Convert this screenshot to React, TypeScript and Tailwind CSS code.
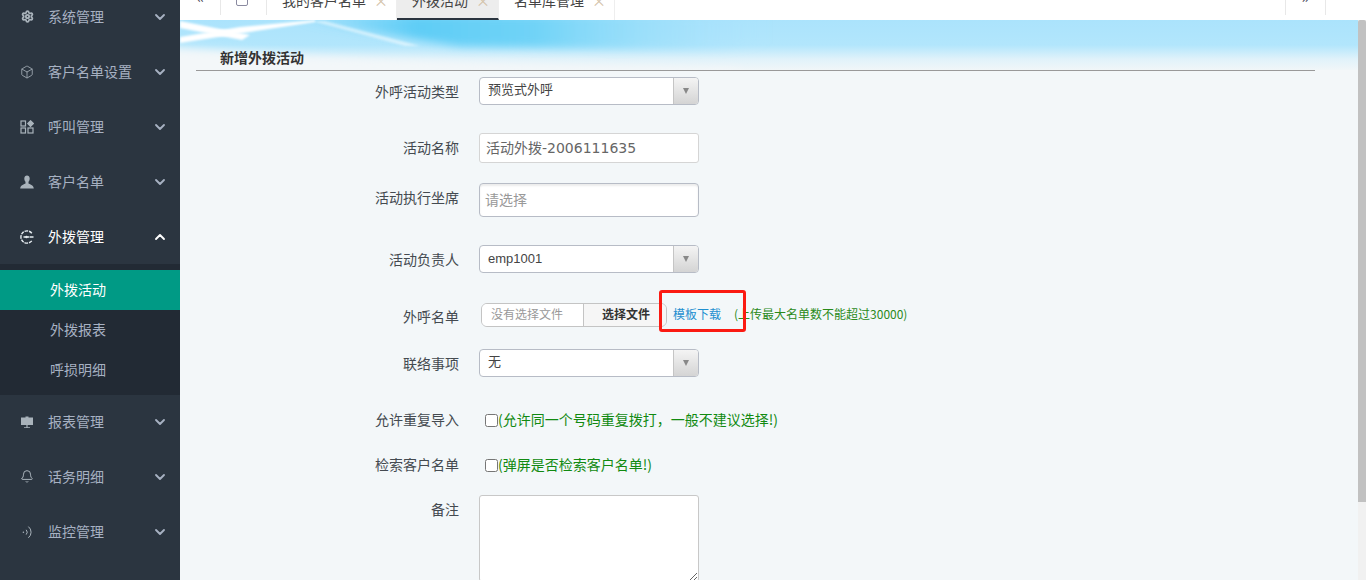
import { ChevronDown, ChevronUp, Bell, Box, Settings } from "lucide-react";

const font = "font-['Noto_Sans_CJK_SC','Liberation_Sans',sans-serif]";

function Apps() {
  return (
    <svg width="14" height="14" viewBox="0 0 14 14" fill="none" stroke="currentColor" strokeWidth="1.2">
      <rect x="1" y="1" width="4.5" height="5" />
      <rect x="1" y="8" width="4.5" height="5" />
      <rect x="8" y="8" width="5" height="5" />
      <path d="M10.5 0.8 L13.4 3.6 L10.5 6.4 L7.8 3.6 Z" fill="currentColor" />
    </svg>
  );
}
function Gear() {
  return <Settings size={13} strokeWidth={3.4} />;
}
function Person() {
  return (
    <svg width="14" height="14" viewBox="0 0 14 14" fill="currentColor">
      <path d="M4.3 3.4 C4.3 1.5 5.5 .4 7 .4 C8.5 .4 9.7 1.5 9.7 3.4 C9.7 5 9.1 6 8.5 6.8 V8.6 C9.5 9.4 13.6 10 13.8 13.4 H.2 C.4 10 4.5 9.4 5.5 8.6 V6.8 C4.9 6 4.3 5 4.3 3.4 Z" />
    </svg>
  );
}
function Circle() {
  return (
    <svg width="14" height="14" viewBox="0 0 14 14" fill="none" stroke="currentColor" strokeWidth="1.4">
      <path d="M11.8 3.2 A6.1 6.1 0 1 0 11.8 10.8" strokeDasharray="3.4 0.9" />
      <path d="M3.5 7 H9 M9.5 7 H13.5" />
      <circle cx="6.5" cy="7" r="1.2" fill="currentColor" stroke="none" />
    </svg>
  );
}
function Board() {
  return (
    <svg width="14" height="14" viewBox="0 0 14 14" fill="currentColor">
      <path d="M1 2.5 H5.5 V1.5 H8.5 V2.5 H13 V10 H1 Z" />
      <path d="M6.4 10 H7.6 V12.2 H10 V13 H4 V12.2 H6.4 Z" />
    </svg>
  );
}
function Signal() {
  return (
    <svg width="14" height="14" viewBox="0 0 14 14" fill="none" stroke="currentColor" strokeWidth="1">
      <circle cx="3.4" cy="7.2" r="0.8" fill="currentColor" stroke="none" />
      <path d="M6.2 4.8 A3.6 3.6 0 0 1 6.2 9.6" />
      <path d="M8.4 1.6 A7.2 7.2 0 0 1 8.4 12.8" />
    </svg>
  );
}

function NavItem({ icon, label, open }: { icon: React.ReactNode; label: string; open?: boolean }) {
  return (
    <div className={`flex h-[55px] items-center pl-[20px] pr-[12px] text-[14px] ${open ? "text-white" : "text-[#a7b1c2]"}`}>
      <span className={`flex w-[14px] justify-center ${open ? "text-[#e8eef2]" : "text-[#a9b3bb]"}`}>{icon}</span>
      <span className="ml-[14px] flex-1 pb-[2px] leading-none">{label}</span>
      {open ? <ChevronUp size={16} strokeWidth={2.8} /> : <ChevronDown size={16} strokeWidth={2.8} />}
    </div>
  );
}

function Sidebar() {
  return (
    <aside className="h-[580px] w-[180px] shrink-0 overflow-hidden bg-[#2b3540]">
      <div className="-mt-[11px]">
        <NavItem icon={<Gear />} label="系统管理" />
        <NavItem icon={<Box size={16} strokeWidth={1.4} />} label="客户名单设置" />
        <NavItem icon={<Apps />} label="呼叫管理" />
        <NavItem icon={<Person />} label="客户名单" />
        <NavItem icon={<Circle />} label="外拨管理" open />
        <div className="-mb-[1px] h-[131px] bg-[#222a34] pt-[6px] text-[14px] text-[#a7b1c2]">
          <div className="flex h-[40px] items-center bg-[#009a85] pb-[2px] pl-[50px] text-white">外拨活动</div>
          <div className="flex h-[40px] items-center pb-[2px] pl-[50px]">外拨报表</div>
          <div className="flex h-[40px] items-center pb-[2px] pl-[50px]">呼损明细</div>
        </div>
        <NavItem icon={<Board />} label="报表管理" />
        <NavItem icon={<Bell size={15} strokeWidth={1.7} />} label="话务明细" />
        <NavItem icon={<Signal />} label="监控管理" />
      </div>
    </aside>
  );
}

function Tab({ label, active }: { label: string; active?: boolean }) {
  return (
    <div className={`flex h-[20px] items-start border-r border-[#eeeeee] pl-[15px] pr-[10px] text-[14px] ${active ? "border-b-2 border-b-[#2b3540] bg-[#ededed]" : ""}`}>
      <span className="-mt-[10px] leading-[20px] text-[#444]">{label}</span>
      <span className="-mt-[10px] ml-[8px] w-[12px] text-center leading-[20px] text-[#d3c2a8]">×</span>
    </div>
  );
}

function TopBar() {
  return (
    <div className="flex h-[20px] shrink-0 bg-white">
      <div className="flex h-[15px] w-[41px] justify-center border-r border-[#e8e8e8] text-[17px] leading-none text-[#445]">
        <span className="-mt-[13px]">«</span>
      </div>
      <div className="flex h-[15px] w-[46px] justify-center border-r border-[#e8e8e8] pr-[3px]">
        <span className="-mt-[6px] h-[12px] w-[12px] rounded-[2px] border border-[#8a8aa0]" />
      </div>
      <Tab label="我的客户名单" />
      <Tab label="外拨活动" active />
      <Tab label="名单库管理" />
      <div className="flex-1" />
      <div className="mr-[40px] flex h-[15px] w-[41px] justify-center border-x border-[#e8e8e8] text-[17px] leading-none text-[#445]">
        <span className="-mt-[13px]">»</span>
      </div>
    </div>
  );
}

function Banner() {
  return (
    <svg className="h-full w-full" viewBox="0 0 1178 50" preserveAspectRatio="none">
      <defs>
        <linearGradient id="sky" x1="0" y1="0" x2="0" y2="1">
          <stop offset="0" stopColor="#abe3fc" />
          <stop offset="0.5" stopColor="#b2e6fc" />
          <stop offset="0.78" stopColor="#e0f2fa" />
          <stop offset="1" stopColor="#f1f6f8" />
        </linearGradient>
        <linearGradient id="deep" gradientUnits="userSpaceOnUse" x1="0" y1="0" x2="1178" y2="0">
          <stop offset="0.1" stopColor="#5fcdf6" stopOpacity="0" />
          <stop offset="0.2" stopColor="#5fcdf6" />
          <stop offset="0.3" stopColor="#70d3f7" />
          <stop offset="0.5" stopColor="#a9e2fb" stopOpacity="0" />
        </linearGradient>
        <filter id="b1" filterUnits="userSpaceOnUse" x="-20" y="-20" width="400" height="90">
          <feGaussianBlur stdDeviation="0.8" />
        </filter>
        <filter id="b6" filterUnits="userSpaceOnUse" x="-40" y="0" width="700" height="90">
          <feGaussianBlur stdDeviation="4" />
        </filter>
        <filter id="b3" filterUnits="userSpaceOnUse" x="50" y="-20" width="700" height="90">
          <feGaussianBlur stdDeviation="4" />
        </filter>
      </defs>
      <rect width="1178" height="50" fill="url(#sky)" />
      <path d="M80 -5 H680 V12 L540 30 L280 26 Z" fill="url(#deep)" filter="url(#b3)" />
      <path d="M-20 27 L120 36 L300 43 L560 50 L560 60 H-20 Z" fill="#f3f7f9" filter="url(#b6)" />
      <path d="M0 1 L70 15 L62 20 L0 8 Z" fill="#ffffff" filter="url(#b1)" />
      <path d="M0 17 L60 7 L135 0 L135 2 L70 12 L0 23 Z" fill="#ffffff" filter="url(#b1)" />
      <path d="M132 1 L145 1 L240 26 L225 26 Z" fill="#ffffff" filter="url(#b1)" opacity="0.5" />
    </svg>
  );
}

function Label({ children, className = "" }: { children: React.ReactNode; className?: string }) {
  return <label className={`w-[279px] shrink-0 text-right text-[14px] leading-[20px] text-[#444a50] ${className}`}>{children}</label>;
}

function Select({ value, low }: { value: string; low?: boolean }) {
  return (
    <div className="flex h-[28px] w-[220px] overflow-hidden rounded-[4px] border border-[#b7bcc6] bg-white">
      <span className={`flex-1 pl-[8px] font-['Liberation_Sans','Noto_Sans_CJK_SC',sans-serif] text-[13px] leading-[24px] text-[#444] ${low ? "pt-[1px]" : ""}`}>{value}</span>
      <span className="flex w-[25px] items-center justify-center border-l border-[#c5c5c5] bg-gradient-to-b from-[#f4f4f4] to-[#d4d4d4]">
        <span className="h-0 w-0 border-x-[3.5px] border-t-[6px] border-x-transparent border-t-[#888]" />
      </span>
    </div>
  );
}

function Row({ className = "", children }: { className?: string; children: React.ReactNode }) {
  return <div className={`flex gap-[20px] ${className}`}>{children}</div>;
}

function Form() {
  return (
    <div className="flex-1 pt-[6px]">
      <Row className="items-center">
        <Label>外呼活动类型</Label>
        <Select value="预览式外呼" />
      </Row>
      <Row className="mt-[28px] items-center">
        <Label className="pb-[2px]">活动名称</Label>
        <input
          readOnly
          value="活动外拨-2006111635"
          className="h-[30px] w-[220px] rounded-[3px] border border-[#d5d5d5] bg-white pb-[2px] pl-[6px] font-['DejaVu_Sans','Noto_Sans_CJK_SC',sans-serif] text-[14px] text-[#666] outline-none"
        />
      </Row>
      <Row className="mt-[20px] items-start">
        <Label className="pt-[4px]">活动执行坐席</Label>
        <div className="h-[34px] w-[220px] rounded-[4px] border border-[#b7bcc6] bg-white pl-[5px] text-[14px] leading-[30px] text-[#999] shadow-[inset_0_2px_2px_rgba(0,0,0,0.08)]">请选择</div>
      </Row>
      <Row className="mt-[28px] items-center">
        <Label>活动负责人</Label>
        <Select value="emp1001" low />
      </Row>
      <Row className="relative mt-[30px] items-center">
        <Label className="pt-[1px]">外呼名单</Label>
        <div className="ml-[2px] flex h-[24px] w-[186px] overflow-hidden rounded-[6px] border border-[#c4c4c4] text-[12px] leading-[20px]">
          <span className="w-[101px] bg-white pl-[9px] text-[#999]">没有选择文件</span>
          <span className="flex-1 border-l border-[#c4c4c4] bg-[#f6f6f6] pl-[2px] text-center font-bold text-[#333]">选择文件</span>
        </div>
        <div className="-ml-[14px] flex items-center pb-[3px] text-[12px]">
          <span className="text-[#1f8fd0]">模板下载</span>
          <span className="ml-[13px] text-[#2a8a1a]">(上传最大名单数不能超过30000)</span>
        </div>
        <div className="absolute left-[479px] top-[-13px] h-[42px] w-[87px] rounded-[3px] border-[3px] border-[#fb1a12]" />
      </Row>
      <Row className="mt-[22px] items-center">
        <Label>联络事项</Label>
        <Select value="无" />
      </Row>
      <Row className="mt-[32px] items-center">
        <Label className="-translate-y-[1px] pb-[2px]">允许重复导入</Label>
        <div className="ml-[6px] flex items-center text-[14px] text-[#118a11]">
          <span className="h-[13px] w-[13px] rounded-[2.5px] border border-[#767676] bg-white" />
          <span className="pb-[2px]">(允许同一个号码重复拨打，一般不建议选择!)</span>
        </div>
      </Row>
      <Row className="mt-[22px] items-center">
        <Label className="-translate-y-[1px] pb-[2px]">检索客户名单</Label>
        <div className="ml-[6px] flex items-center text-[14px] text-[#118a11]">
          <span className="h-[13px] w-[13px] rounded-[2.5px] border border-[#767676] bg-white" />
          <span className="pb-[2px]">(弹屏是否检索客户名单!)</span>
        </div>
      </Row>
      <Row className="mt-[18px] items-start">
        <Label className="pt-[4px]">备注</Label>
        <textarea readOnly className="h-[87px] w-[220px] rounded-[3px] border border-[#c8c8c8] bg-white outline-none" />
      </Row>
    </div>
  );
}

export default function App() {
  return (
    <div className={`flex h-[580px] w-[1366px] overflow-hidden ${font}`}>
      <Sidebar />
      <main className="flex min-w-0 flex-1 flex-col">
        <TopBar />
        <div className="flex min-h-0 flex-1 bg-[#f3f7f9]">
          <div className="relative min-w-0 flex-1">
            <div className="pointer-events-none absolute inset-x-0 top-0 h-[50px]">
              <Banner />
            </div>
            <div className="relative">
              <div className="ml-[16px] mr-[43px] mt-[28px] h-[23px] border-b border-[#999] pl-[24px] text-[14px] font-bold leading-[18px] text-[#333]">新增外拨活动</div>
              <Form />
            </div>
          </div>
          <div className="w-[8px] shrink-0 bg-[#f1f1f1]">
            <div className="h-[482px] rounded-t-[2px] bg-[#c1c1c1]" />
          </div>
        </div>
      </main>
    </div>
  );
}
